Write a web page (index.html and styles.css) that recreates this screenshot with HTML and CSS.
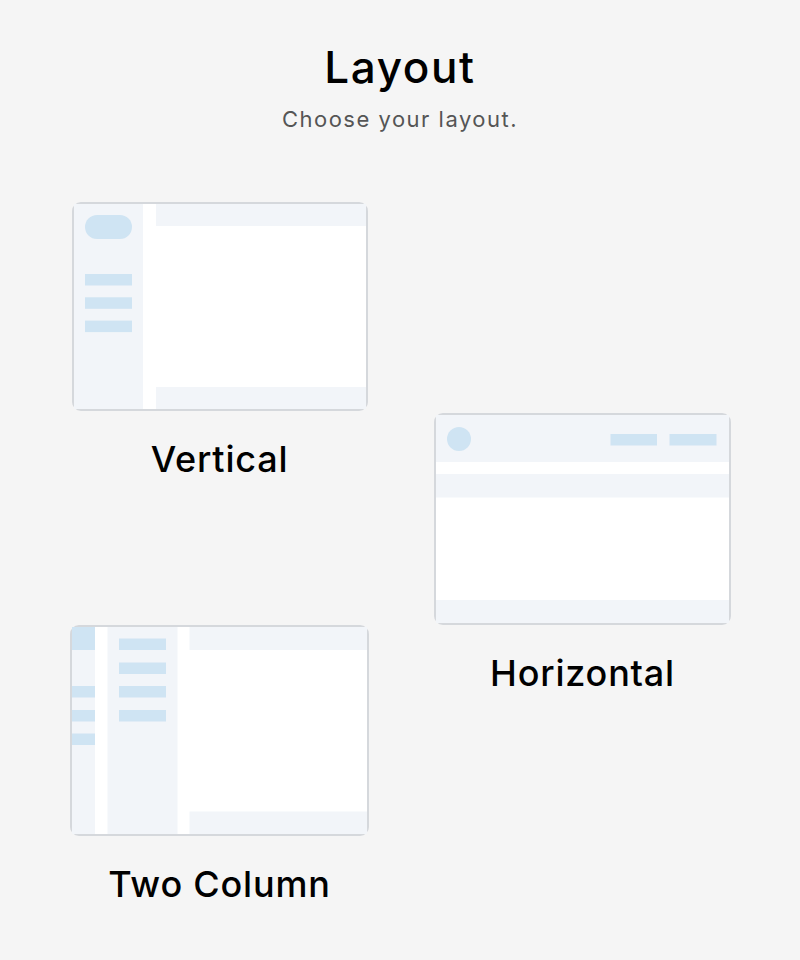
FILE: index.html
```html
<!DOCTYPE html>
<html lang="en">
<head>
<meta charset="UTF-8" />
<meta name="viewport" content="width=device-width, initial-scale=1" />
<title>Layout</title>
<link rel="stylesheet" href="styles.css">
</head>
<body>

<div class="page">
  <div class="heading">
    <h1>Layout</h1>
    <p class="sub">Choose your layout.</p>
  </div>

  <div class="layouts">
    <div class="option vertical">
      <svg class="preview" viewBox="0 0 296 209">
        <rect x="1" y="1" width="294" height="207" rx="8" fill="#fff" stroke="#d5d8dc" stroke-width="2"/>
        <rect x="2" y="2" width="69" height="205" fill="#f2f5f9"/>
        <rect x="84" y="2" width="210" height="22" fill="#f2f5f9"/>
        <rect x="84" y="185" width="210" height="22" fill="#f2f5f9"/>
        <rect x="13" y="13" width="47" height="24" rx="12" fill="#cfe4f3"/>
        <rect x="13" y="72" width="47" height="11.5" fill="#cfe4f3"/>
        <rect x="13" y="95.3" width="47" height="11.5" fill="#cfe4f3"/>
        <rect x="13" y="118.6" width="47" height="11.5" fill="#cfe4f3"/>
      </svg>
      <div class="label">Vertical</div>
    </div>

    <div class="option horizontal">
      <svg class="preview" viewBox="0 0 297 212">
        <rect x="1" y="1" width="295" height="210" rx="8" fill="#fff" stroke="#d5d8dc" stroke-width="2"/>
        <rect x="2" y="2" width="293" height="47" fill="#f2f5f9"/>
        <circle cx="25" cy="26" r="12" fill="#cfe4f3"/>
        <rect x="176.5" y="21" width="46.5" height="11.5" fill="#cfe4f3"/>
        <rect x="235.5" y="21" width="47" height="11.5" fill="#cfe4f3"/>
        <rect x="2" y="61" width="293" height="23.5" fill="#f2f5f9"/>
        <rect x="2" y="187" width="293" height="23" fill="#f2f5f9"/>
      </svg>
      <div class="label">Horizontal</div>
    </div>

    <div class="option two-column">
      <svg class="preview" viewBox="0 0 299 211">
        <rect x="1" y="1" width="297" height="209" rx="8" fill="#fff" stroke="#d5d8dc" stroke-width="2"/>
        <rect x="2" y="2" width="23" height="207" fill="#f2f5f9"/>
        <rect x="2" y="2" width="23" height="23" fill="#cfe4f3"/>
        <rect x="2" y="61" width="23" height="11.5" fill="#cfe4f3"/>
        <rect x="2" y="85" width="23" height="11.5" fill="#cfe4f3"/>
        <rect x="2" y="108.5" width="23" height="11.5" fill="#cfe4f3"/>
        <rect x="37.5" y="2" width="70" height="207" fill="#f2f5f9"/>
        <rect x="49" y="13.5" width="47" height="11.5" fill="#cfe4f3"/>
        <rect x="49" y="37.5" width="47" height="11.5" fill="#cfe4f3"/>
        <rect x="49" y="61" width="47" height="11.5" fill="#cfe4f3"/>
        <rect x="49" y="85" width="47" height="11.5" fill="#cfe4f3"/>
        <rect x="119.5" y="2" width="177.5" height="23" fill="#f2f5f9"/>
        <rect x="119.5" y="186.5" width="177.5" height="22.5" fill="#f2f5f9"/>
      </svg>
      <div class="label">Two Column</div>
    </div>
  </div>
</div>

</body>
</html>
```

FILE: styles.css
```css
body {
  margin: 0;
  background: #f5f5f5;
  font-family: Inter, "Noto Sans", sans-serif;
  color: #000;
}
.page {
  width: 800px;
  padding-top: 38px;
}
.heading {
  text-align: center;
}
h1 {
  margin: 0;
  font-size: 44px;
  font-weight: 500;
  line-height: 58px;
  letter-spacing: 1.6px;
}
.sub {
  margin: 8px 0 0;
  font-size: 22px;
  color: #555;
  line-height: 30px;
  letter-spacing: 1.5px;
}
.layouts {
  display: grid;
  grid-template-columns: 299px 297px;
  grid-template-rows: 210.5px 212.5px 212px auto;
  column-gap: 65px;
  margin-top: 68px;
  padding-left: 70px;
}
.vertical {
  grid-column: 1;
  grid-row: 1 / span 2;
}
.horizontal {
  grid-column: 2;
  grid-row: 2 / span 2;
}
.two-column {
  grid-column: 1;
  grid-row: 3 / span 2;
}
.option {
  display: flex;
  flex-direction: column;
  align-items: center;
}
.preview {
  display: block;
  width: 296px;
  height: auto;
}
.horizontal .preview {
  width: 297px;
}
.two-column .preview {
  width: 299px;
}
.label {
  margin-top: 26px;
  font-size: 36px;
  font-weight: 500;
  line-height: 44px;
  letter-spacing: 0.8px;
}
```
